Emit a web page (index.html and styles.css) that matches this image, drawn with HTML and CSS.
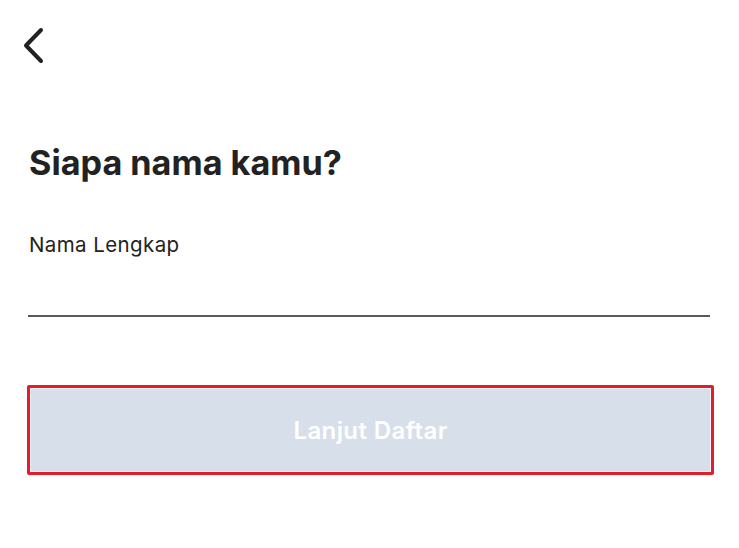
FILE: index.html
```html
<!DOCTYPE html>
<html lang="id">
<head>
<meta charset="utf-8">
<link rel="stylesheet" href="styles.css">
</head>
<body>
<div class="screen">
  <div class="topbar">
    <svg class="back" width="24" height="38" viewBox="0 0 24 38" aria-label="Kembali">
      <polyline points="19,3 4,18.5 19,34" fill="none" stroke="#222" stroke-width="4" stroke-linecap="round" stroke-linejoin="round"/>
    </svg>
  </div>
  <h1 class="title">Siapa nama kamu?</h1>
  <label class="label">Nama Lengkap</label>
  <div class="field"></div>
  <div class="btn-wrap">
    <button class="btn" disabled>Lanjut Daftar</button>
  </div>
</div>
</body>
</html>
```

FILE: styles.css
```css
html, body {
  margin: 0;
  padding: 0;
  background: #fff;
}
.screen {
  width: 739px;
  height: 548px;
  box-sizing: border-box;
  padding: 0 29px 0 29px;
  font-family: Inter, "Liberation Sans", sans-serif;
  color: #222;
  display: flex;
  flex-direction: column;
}
.topbar {
  height: 92px;
  padding-top: 27px;
  box-sizing: border-box;
  margin-left: -7px;
}
.back {
  display: block;
}
.title {
  margin: 50px 0 0 0;
  font-size: 34.2px;
  font-weight: 700;
  line-height: 42px;
  letter-spacing: 0;
  color: #222;
}
.label {
  margin-top: 50px;
  font-size: 20.5px;
  line-height: 22px;
  letter-spacing: 0.4px;
  color: #222;
}
.field {
  margin-top: 59px;
  height: 2px;
  background: #5a5a5a;
  margin-left: -1px;
  width: 682px;
}
.btn-wrap {
  margin-top: 68px;
  margin-left: -2px;
  width: 687px;
  height: 90px;
  box-sizing: border-box;
  border: 3px solid #e01f2a;
  border-radius: 2px;
  padding: 1px;
  background: #eef1f6;
  display: flex;
}
.btn {
  flex: 1;
  border: none;
  background: #d7dfeb;
  color: #fff;
  font-family: Inter, "Liberation Sans", sans-serif;
  font-size: 24px;
  font-weight: 600;
  letter-spacing: 0.4px;
  padding: 0;
}
```
